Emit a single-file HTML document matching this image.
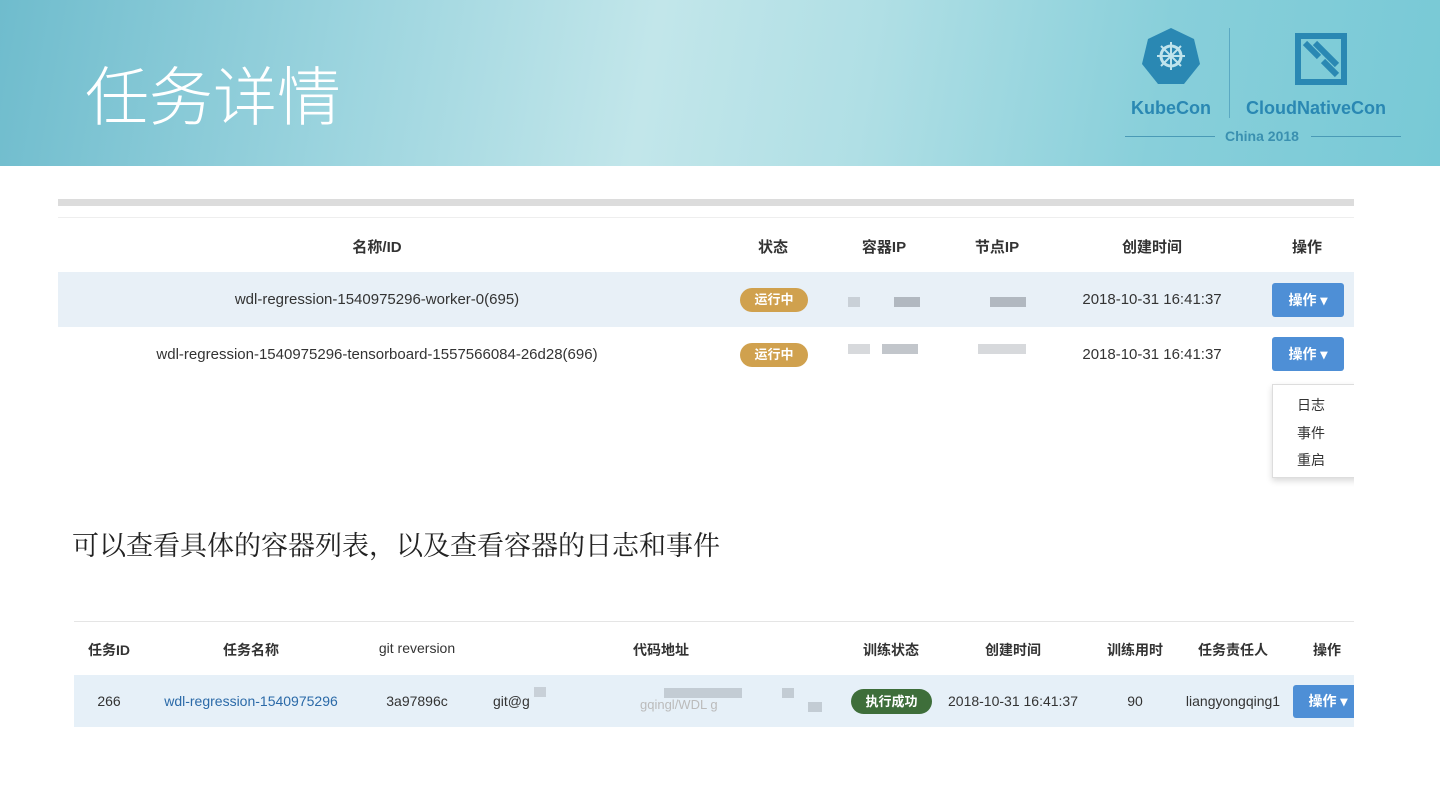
<!DOCTYPE html>
<html><head><meta charset="utf-8"><style>
*{margin:0;padding:0;box-sizing:border-box}
body{width:1440px;height:810px;position:relative;background:#fff;font-family:"Liberation Sans","Noto Sans CJK SC",sans-serif;overflow:hidden;color:#333}
.hdr{position:absolute;left:0;top:0;width:1440px;height:166px;background:linear-gradient(100deg,#6fbccd 0%,#9dd5df 25%,#c2e6ea 45%,#b0dfe5 60%,#88cfda 80%,#78c9d6 100%)}
.title{position:absolute;left:85px;top:47px;font-size:64px;color:#fff;font-family:"Noto Sans CJK SC",sans-serif;font-weight:300}
.a{position:absolute;white-space:nowrap;font-size:15px}
.c{transform:translateX(-50%)}
.bold{font-weight:bold}
.badge{position:absolute;background:#d0a14e;color:#fff;font-size:13px;font-weight:bold;border-radius:12px;width:68px;height:24px;line-height:24px;text-align:center}
.btn{position:absolute;background:#4e8fd6;color:#fff;font-size:14px;font-weight:bold;border-radius:3px;width:72px;height:34px;line-height:34px;text-align:center}
.blur{position:absolute;height:10px;background:#9aa0a8;opacity:.7}
.blue{color:#2b6aa8}
</style></head><body>
<div class="hdr"></div>
<div class="title">任务详情</div>
<svg style="position:absolute;left:1140px;top:26px" width="62" height="62" viewBox="0 0 62 62"><polygon points="31,2 54,13 60,38 44,58 18,58 2,38 8,13" fill="#2a88b3"/><circle cx="31" cy="30" r="10" fill="none" stroke="#bfe3ec" stroke-width="3"/><path d="M31 16v28M17 30h28M21 20l20 20M41 20l-20 20" stroke="#bfe3ec" stroke-width="2"/></svg>
<div class="a bold" style="left:1131px;top:98px;font-size:18px;color:#2a88b3">KubeCon</div>
<div style="position:absolute;left:1229px;top:28px;width:1px;height:90px;background:#5ba9c2"></div>
<svg style="position:absolute;left:1295px;top:33px" width="52" height="52" viewBox="0 0 52 52"><rect x="3" y="3" width="46" height="46" fill="none" stroke="#2a88b3" stroke-width="6"/><path d="M10 10l14 14M28 28l14 14M20 10l22 22" stroke="#2a88b3" stroke-width="6"/></svg>
<div class="a bold" style="left:1246px;top:98px;font-size:18px;color:#2a88b3">CloudNativeCon</div>
<div style="position:absolute;left:1125px;top:136px;width:90px;height:1px;background:#4a9ab6"></div>
<div style="position:absolute;left:1311px;top:136px;width:90px;height:1px;background:#4a9ab6"></div>
<div class="a bold" style="left:1225px;top:128px;font-size:14px;color:#3a90b0">China 2018</div>

<div style="position:absolute;left:58px;top:199px;width:1296px;height:7px;background:#dcdcdc"></div>
<div style="position:absolute;left:58px;top:217px;width:1296px;height:1px;background:#eee"></div>
<div style="position:absolute;left:58px;top:272px;width:1296px;height:55px;background:#e8f0f7"></div>
<div class="a bold c" style="left:377px;top:236px">名称/ID</div>
<div class="a bold c" style="left:773px;top:236px">状态</div>
<div class="a bold c" style="left:884px;top:236px">容器IP</div>
<div class="a bold c" style="left:997px;top:236px">节点IP</div>
<div class="a bold c" style="left:1152px;top:236px">创建时间</div>
<div class="a bold c" style="left:1307px;top:236px">操作</div>
<div class="a c" style="left:377px;top:291px">wdl-regression-1540975296-worker-0(695)</div>
<div class="a c" style="left:377px;top:346px">wdl-regression-1540975296-tensorboard-1557566084-26d28(696)</div>
<div class="badge" style="left:740px;top:288px">运行中</div>
<div class="badge" style="left:740px;top:343px">运行中</div>
<div class="blur" style="left:848px;top:297px;width:12px;opacity:.4"></div>
<div class="blur" style="left:894px;top:297px;width:26px"></div>
<div class="blur" style="left:990px;top:297px;width:36px"></div>
<div class="blur" style="left:848px;top:344px;width:22px;opacity:.4"></div>
<div class="blur" style="left:882px;top:344px;width:36px;opacity:.6"></div>
<div class="blur" style="left:978px;top:344px;width:48px;opacity:.4"></div>
<div class="a c" style="left:1152px;top:291px">2018-10-31 16:41:37</div>
<div class="a c" style="left:1152px;top:346px">2018-10-31 16:41:37</div>
<div class="btn" style="left:1272px;top:283px">操作 ▾</div>
<div class="btn" style="left:1272px;top:337px">操作 ▾</div>
<div style="position:absolute;left:1272px;top:384px;width:90px;height:94px;background:#fff;border:1px solid #ddd;box-shadow:0 3px 6px rgba(0,0,0,.15)"></div>
<div class="a" style="left:1297px;top:395px;font-size:14px">日志</div>
<div class="a" style="left:1297px;top:423px;font-size:14px">事件</div>
<div class="a" style="left:1297px;top:450px;font-size:14px">重启</div>
<div style="position:absolute;left:1354px;top:180px;width:86px;height:330px;background:#fff"></div>

<div class="a" style="left:72px;top:524px;font-size:27px;color:#222;font-family:'Noto Serif CJK SC',serif">可以查看具体的容器列表，以及查看容器的日志和事件</div>

<div style="position:absolute;left:74px;top:621px;width:1280px;height:1px;background:#e5e5e5"></div>
<div style="position:absolute;left:74px;top:675px;width:1280px;height:52px;background:#e6f0f8"></div>
<div class="a bold c" style="left:109px;top:640px;font-size:14px">任务ID</div>
<div class="a bold c" style="left:251px;top:640px;font-size:14px">任务名称</div>
<div class="a c" style="left:417px;top:640px;font-size:14px">git reversion</div>
<div class="a bold c" style="left:661px;top:640px;font-size:14px">代码地址</div>
<div class="a bold c" style="left:891px;top:640px;font-size:14px">训练状态</div>
<div class="a bold c" style="left:1013px;top:640px;font-size:14px">创建时间</div>
<div class="a bold c" style="left:1135px;top:640px;font-size:14px">训练用时</div>
<div class="a bold c" style="left:1233px;top:640px;font-size:14px">任务责任人</div>
<div class="a bold c" style="left:1327px;top:640px;font-size:14px">操作</div>
<div class="a c" style="left:109px;top:693px;font-size:14px">266</div>
<div class="a c blue" style="left:251px;top:693px;font-size:14px">wdl-regression-1540975296</div>
<div class="a c" style="left:417px;top:693px;font-size:14px">3a97896c</div>
<div class="a" style="left:493px;top:693px;font-size:14px">git@g</div>
<div class="blur" style="left:534px;top:687px;width:12px;opacity:.4"></div>
<div class="blur" style="left:664px;top:688px;width:78px;opacity:.45"></div>
<div class="blur" style="left:782px;top:688px;width:12px;opacity:.45"></div>
<div class="blur" style="left:808px;top:702px;width:14px;opacity:.45"></div>
<div class="a" style="left:640px;top:697px;font-size:13px;color:#bbb">gqingl/WDL g</div>
<div style="position:absolute;left:851px;top:689px;width:81px;height:25px;border-radius:13px;background:#3e6e3a;color:#fff;font-size:13px;font-weight:bold;text-align:center;line-height:25px">执行成功</div>
<div class="a c" style="left:1013px;top:693px;font-size:14px">2018-10-31 16:41:37</div>
<div class="a c" style="left:1135px;top:693px;font-size:14px">90</div>
<div class="a c" style="left:1233px;top:693px;font-size:14px">liangyongqing1</div>
<div class="btn" style="left:1293px;top:685px;width:70px;height:33px;line-height:33px">操作 ▾</div>
<div style="position:absolute;left:1354px;top:600px;width:86px;height:150px;background:#fff"></div>
</body></html>
